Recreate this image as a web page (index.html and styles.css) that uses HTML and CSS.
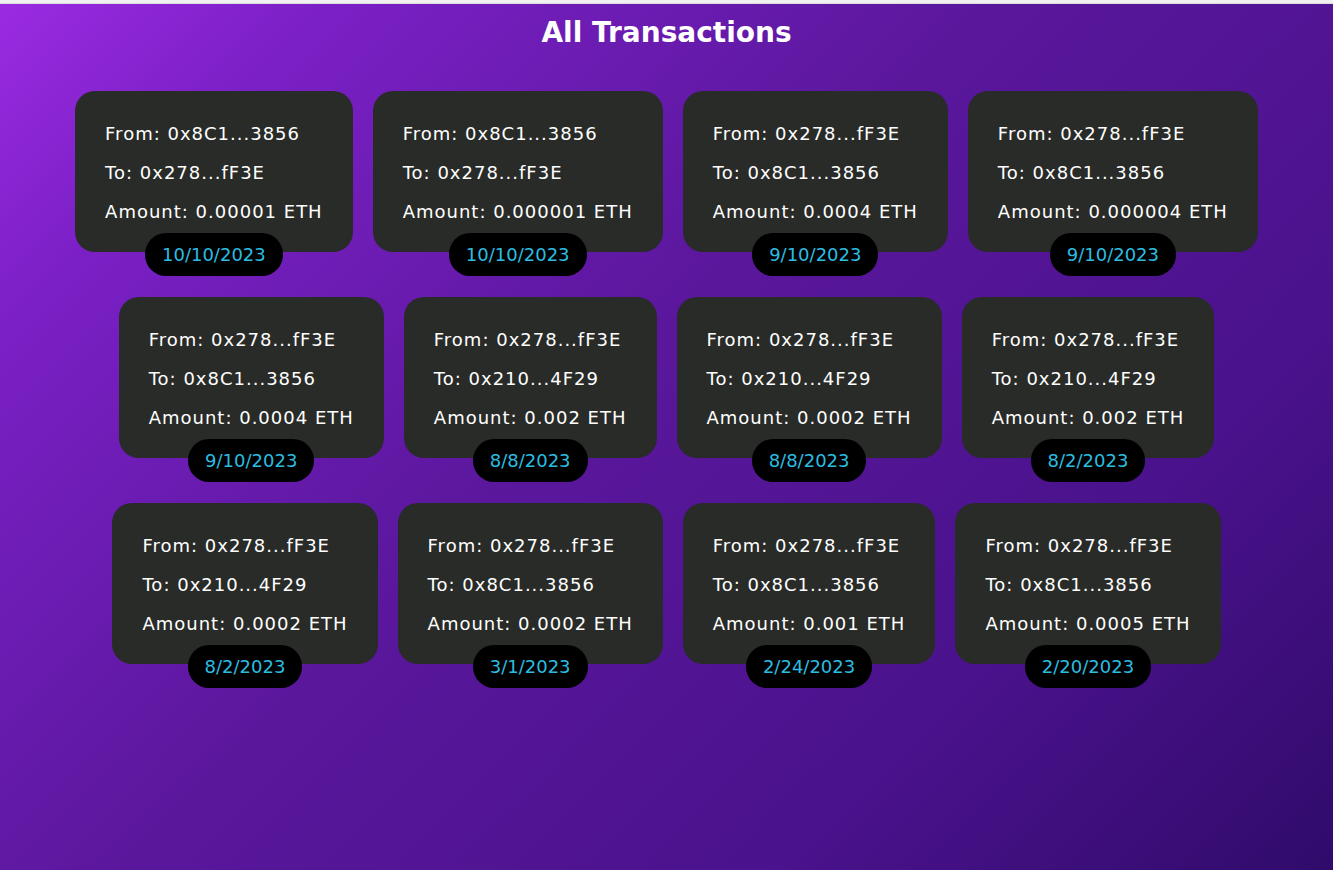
FILE: index.html
```html
<!DOCTYPE html>
<html lang="en">
<head>
<meta charset="utf-8">
<title>All Transactions</title>
<link rel="stylesheet" href="styles.css">
</head>
<body>
<div class="topbar"></div>
<main class="page">
  <h1 class="title">All Transactions</h1>
  <div class="grid">
    <div class="tx"><div class="card"><p>From: 0x8C1...3856</p><p>To: 0x278...fF3E</p><p>Amount: 0.00001 ETH</p></div><div class="date">10/10/2023</div></div>
    <div class="tx"><div class="card"><p>From: 0x8C1...3856</p><p>To: 0x278...fF3E</p><p>Amount: 0.000001 ETH</p></div><div class="date">10/10/2023</div></div>
    <div class="tx"><div class="card"><p>From: 0x278...fF3E</p><p>To: 0x8C1...3856</p><p>Amount: 0.0004 ETH</p></div><div class="date">9/10/2023</div></div>
    <div class="tx"><div class="card"><p>From: 0x278...fF3E</p><p>To: 0x8C1...3856</p><p>Amount: 0.000004 ETH</p></div><div class="date">9/10/2023</div></div>
    <div class="tx"><div class="card"><p>From: 0x278...fF3E</p><p>To: 0x8C1...3856</p><p>Amount: 0.0004 ETH</p></div><div class="date">9/10/2023</div></div>
    <div class="tx"><div class="card"><p>From: 0x278...fF3E</p><p>To: 0x210...4F29</p><p>Amount: 0.002 ETH</p></div><div class="date">8/8/2023</div></div>
    <div class="tx"><div class="card"><p>From: 0x278...fF3E</p><p>To: 0x210...4F29</p><p>Amount: 0.0002 ETH</p></div><div class="date">8/8/2023</div></div>
    <div class="tx"><div class="card"><p>From: 0x278...fF3E</p><p>To: 0x210...4F29</p><p>Amount: 0.002 ETH</p></div><div class="date">8/2/2023</div></div>
    <div class="tx"><div class="card"><p>From: 0x278...fF3E</p><p>To: 0x210...4F29</p><p>Amount: 0.0002 ETH</p></div><div class="date">8/2/2023</div></div>
    <div class="tx"><div class="card"><p>From: 0x278...fF3E</p><p>To: 0x8C1...3856</p><p>Amount: 0.0002 ETH</p></div><div class="date">3/1/2023</div></div>
    <div class="tx"><div class="card"><p>From: 0x278...fF3E</p><p>To: 0x8C1...3856</p><p>Amount: 0.001 ETH</p></div><div class="date">2/24/2023</div></div>
    <div class="tx"><div class="card"><p>From: 0x278...fF3E</p><p>To: 0x8C1...3856</p><p>Amount: 0.0005 ETH</p></div><div class="date">2/20/2023</div></div>
  </div>
</main>
</body>
</html>
```
FILE: styles.css
```css
html, body {
  margin: 0;
  padding: 0;
}
body {
  min-height: 100vh;
  font-family: "DejaVu Sans", Inter, "Liberation Sans", sans-serif;
  color: #ffffff;
  background: linear-gradient(135deg, #9b2be1 0%, #7b20c6 15%, #5a179c 45%, #4a128c 75%, #300b6b 100%);
  background-attachment: fixed;
}
.topbar {
  height: 3px;
  background: #f1f1f1;
  border-bottom: 1px solid #dcdcdc;
}
.page {
  padding: 10px 0 40px;
}
.title {
  margin: 0;
  text-align: center;
  font-size: 28px;
  line-height: 38px;
  font-weight: 700;
}
.grid {
  max-width: 1240px;
  margin: 39px auto 0;
  display: flex;
  flex-wrap: wrap;
  justify-content: center;
  column-gap: 20px;
  row-gap: 21px;
}
.tx {
  display: flex;
  flex-direction: column;
  align-items: center;
}
.card {
  background: #292b28;
  border-radius: 20px;
  padding: 32px 30px 30px;
  align-self: stretch;
}
.card p {
  margin: 0 0 18px;
  font-size: 18px;
  line-height: 21px;
  letter-spacing: 1px;
  white-space: nowrap;
}
.card p:last-child {
  margin-bottom: 0;
}
.date {
  margin-top: -19px;
  background: #000000;
  color: #2bbde0;
  border-radius: 21px;
  padding: 11px 17px;
  font-size: 18px;
  line-height: 21px;
}
```
